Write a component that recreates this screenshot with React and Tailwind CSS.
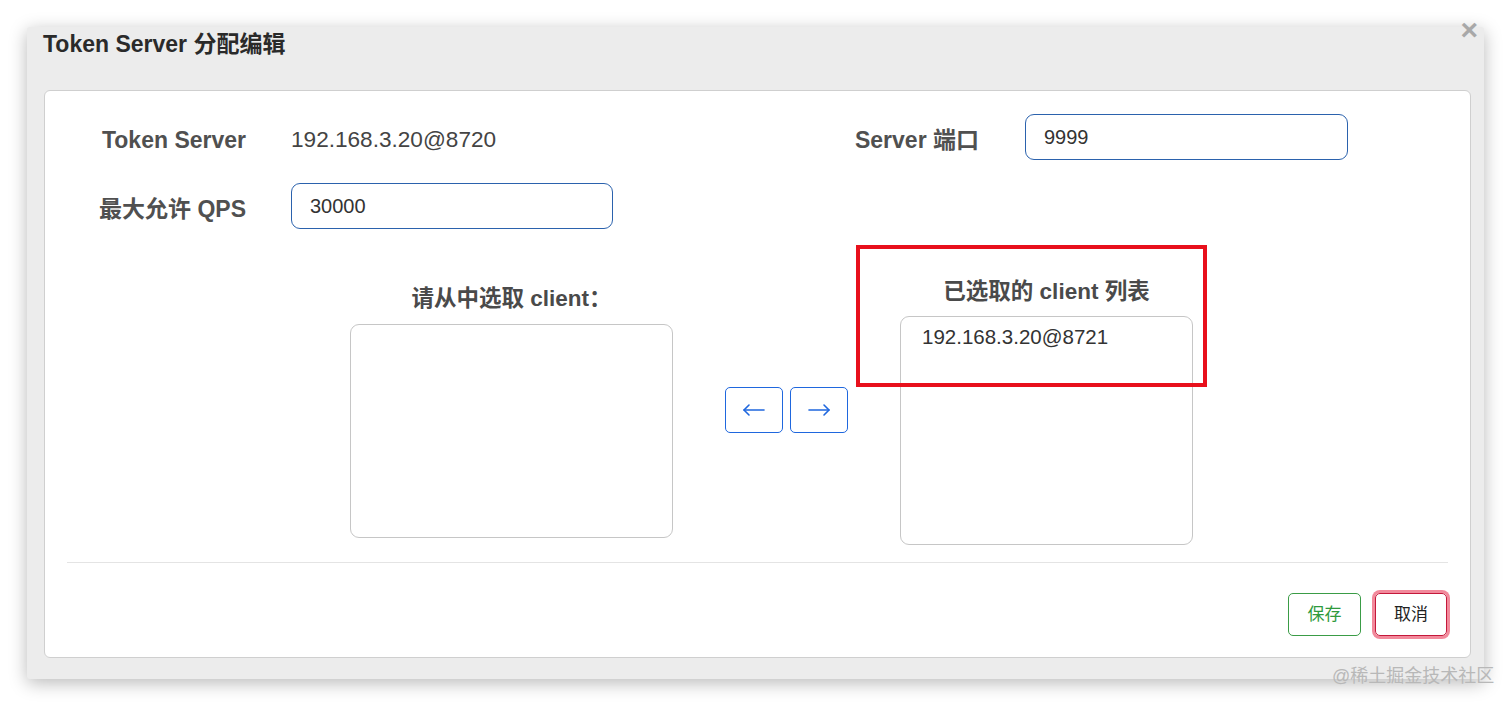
const font = { fontFamily: '"Liberation Sans", "Noto Sans CJK SC", sans-serif' };

function Label({ children, className = "" }) {
  return (
    <div className={"text-[23px] font-bold text-[#505050] text-right pt-[6px] " + className}>
      {children}
    </div>
  );
}

function TextInput({ value, className = "" }) {
  return (
    <div
      className={
        "h-[46px] border border-[#2b62ad] rounded-[9px] flex items-center pl-[18px] text-[20px] text-[#333] " +
        className
      }
    >
      {value}
    </div>
  );
}

function Arrow({ left }) {
  return (
    <svg width="24" height="14" viewBox="0 0 24 14" fill="none" stroke="#1f67de" strokeWidth="1.6" strokeLinecap="round" strokeLinejoin="round">
      {left ? (
        <>
          <path d="M2 7h20" />
          <path d="M7 2L2 7l5 5" />
        </>
      ) : (
        <>
          <path d="M2 7h20" />
          <path d="M17 2l5 5-5 5" />
        </>
      )}
    </svg>
  );
}

export default function App() {
  return (
    <div className="relative w-[1512px] h-[706px] bg-white overflow-hidden" style={font}>
      <div className="absolute left-[27px] top-[27px] w-[1457px] h-[652px] bg-[#ececec] rounded-[3px] shadow-[0_4px_18px_rgba(0,0,0,0.28)] flex flex-col">
        <div className="relative h-[63px] pl-[16px] pt-[3px]">
          <h1 className="text-[23px] font-bold text-[#2a2a2a] leading-[28px]">Token Server 分配编辑</h1>
          <span className="absolute right-[6px] -top-[12px] text-[30px] font-bold text-[#a8a8a8] leading-none">×</span>
        </div>

        <div className="ml-[17px] w-[1427px] h-[568px] bg-white border border-[#cfcfcf] rounded-[6px] flex flex-col">
          {/* row 1 */}
          <div className="flex items-center mt-[23px] h-[46px]">
            <Label className="w-[201px]">Token Server</Label>
            <div className="ml-[45px] w-[322px] text-[22.6px] text-[#444] pt-[6px]">192.168.3.20@8720</div>
            <Label className="w-[366px]">Server 端口</Label>
            <TextInput value="9999" className="ml-[46px] w-[323px]" />
          </div>

          {/* row 2 */}
          <div className="flex items-center mt-[23px] h-[46px]">
            <Label className="w-[201px]">最大允许 QPS</Label>
            <TextInput value="30000" className="ml-[45px] w-[322px]" />
          </div>

          {/* client transfer */}
          <div className="flex items-center mt-[51px] pl-[305px]">
            <div className="w-[323px] flex flex-col items-center">
              <div className="text-[22.5px] font-bold text-[#4a4a4a] leading-[24px]">请从中选取 client：</div>
              <div className="mt-[13px] w-[323px] h-[214px] border border-[#c6c6c6] rounded-[9px]"></div>
            </div>

            <div className="ml-[52px] flex gap-[7px] -mt-[6px]">
              <button className="w-[58px] h-[46px] border border-[#1f67de] rounded-[5px] flex items-center justify-center">
                <Arrow left />
              </button>
              <button className="w-[58px] h-[46px] border border-[#1f67de] rounded-[5px] flex items-center justify-center">
                <Arrow />
              </button>
            </div>

            <div className="relative ml-[52px] w-[293px] flex flex-col items-center">
              <div className="text-[22.5px] font-bold text-[#4a4a4a] leading-[24px]">已选取的 client 列表</div>
              <div className="mt-[12px] w-[293px] h-[229px] border border-[#c6c6c6] rounded-[9px] pl-[21px] pt-[5px] text-[20.5px] text-[#333]">
                192.168.3.20@8721
              </div>
              <div className="absolute -left-[44px] -top-[35px] w-[351px] h-[142px] border-[4px] border-[#e8101c]"></div>
            </div>
          </div>

          <div className="mx-[22px] mt-[17px] h-px bg-[#e4e4e4]"></div>

          <div className="flex justify-end gap-[14px] mr-[23px] mt-[30px]">
            <button className="w-[73px] h-[43px] border border-[#3a9c46] rounded-[5px] text-[#2f9a3c] text-[17px]">保存</button>
            <button className="w-[72px] h-[43px] border border-[#c4183a] rounded-[5px] text-[#222] text-[17px] ring-[3px] ring-[#f2899b]">取消</button>
          </div>
        </div>
      </div>

      <div className="absolute left-[1332px] top-[664px] text-[18px] text-[#b8b8b8] leading-[24px]">@稀土掘金技术社区</div>
    </div>
  );
}
